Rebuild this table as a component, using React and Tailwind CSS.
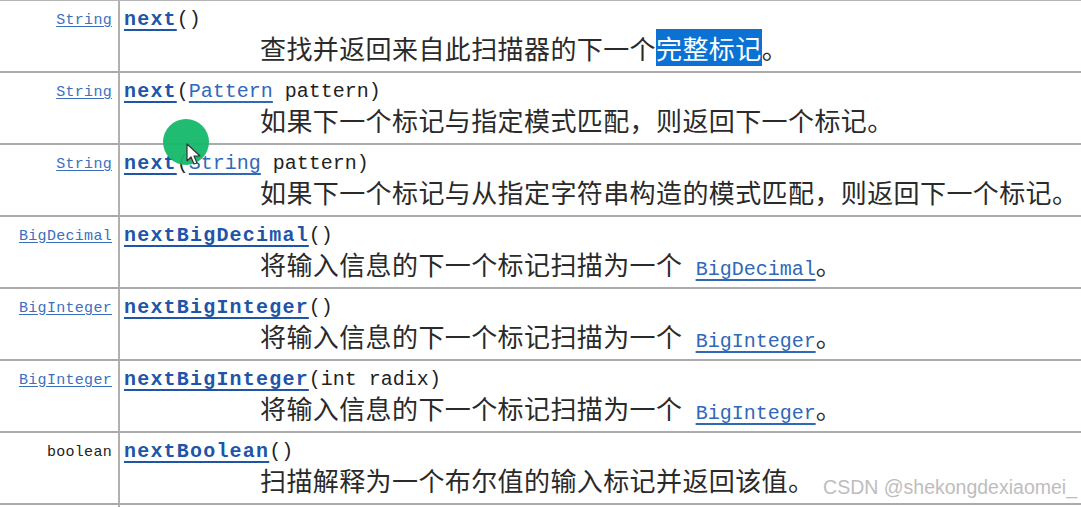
import React from 'react';

const rows = [
  { type: 'String', link: true, name: 'next', args: [], desc: [{ t: '查找并返回来自此扫描器的下一个' }, { t: '完整标记', hl: true }, { t: '。' }] },
  { type: 'String', link: true, name: 'next', args: [{ t: 'Pattern', link: true }, { t: ' pattern' }], desc: [{ t: '如果下一个标记与指定模式匹配，则返回下一个标记。' }] },
  { type: 'String', link: true, name: 'next', args: [{ t: 'String', link: true }, { t: ' pattern' }], desc: [{ t: '如果下一个标记与从指定字符串构造的模式匹配，则返回下一个标记。' }] },
  { type: 'BigDecimal', link: true, name: 'nextBigDecimal', args: [], desc: [{ t: '将输入信息的下一个标记扫描为一个 ' }, { t: 'BigDecimal', code: true }, { t: '。' }] },
  { type: 'BigInteger', link: true, name: 'nextBigInteger', args: [], desc: [{ t: '将输入信息的下一个标记扫描为一个 ' }, { t: 'BigInteger', code: true }, { t: '。' }] },
  { type: 'BigInteger', link: true, name: 'nextBigInteger', args: [{ t: 'int radix' }], desc: [{ t: '将输入信息的下一个标记扫描为一个 ' }, { t: 'BigInteger', code: true }, { t: '。' }] },
  { type: 'boolean', link: false, name: 'nextBoolean', args: [], desc: [{ t: '扫描解释为一个布尔值的输入标记并返回该值。' }] },
];

const mono = "font-['Liberation_Mono','Noto_Sans_CJK_SC',monospace]";
const cjk = "font-['Noto_Sans_CJK_SC','Liberation_Sans',sans-serif]";

function Row({ row }) {
  return (
    <div className="flex h-[72px] border-b-2 border-[#ababab]">
      <div className="w-[120px] shrink-0 border-r-2 border-[#b0b0b0] pr-[6px] pt-[5px] text-right">
        <span
          className={`${mono} text-[15px] leading-[17px] tracking-[0.3px] ${
            row.link ? 'text-[#3b6fc0] underline underline-offset-2' : 'text-[#222]'
          }`}
        >
          {row.type}
        </span>
      </div>
      <div className="flex-1 pl-[4px] pt-[7px]">
        <div className={`${mono} text-[20px] leading-[24px] text-[#222] whitespace-pre`}>
          <span className="font-bold tracking-[1.2px] text-[#1f55a8] underline underline-offset-4">{row.name}</span>
          <span>(</span>
          {row.args.map((a, i) => (
            <span key={i} className={a.link ? 'text-[#3168b8] underline underline-offset-4' : ''}>
              {a.t}
            </span>
          ))}
          <span>)</span>
        </div>
        <div className={`${cjk} pl-[136px] text-[26px] leading-[32px] tracking-[0.4px] text-[#2a2a2a] whitespace-pre`}>
          {row.desc.map((d, i) =>
            d.hl ? (
              <span key={i} className="bg-[#0b72d4] text-white">{d.t}</span>
            ) : d.code ? (
              <span key={i} className={`${mono} ml-[7px] text-[20px] tracking-normal text-[#3168b8] underline underline-offset-4`}>{d.t}</span>
            ) : (
              <span key={i}>{d.t}</span>
            )
          )}
        </div>
      </div>
    </div>
  );
}

export default function App() {
  return (
    <div className="relative w-[1081px] h-[507px] overflow-hidden bg-white">
      <div className="border-t border-[#b4b4b4]">
        {rows.map((r, i) => (
          <Row key={i} row={r} />
        ))}
        <div className="h-[6px] w-[120px] border-r-2 border-[#b0b0b0]" />
      </div>

      {/* cursor highlight */}
      <div className="absolute left-[163px] top-[119px] h-[46px] w-[46px] rounded-full bg-[#14b86a]/95" />
      <svg className="absolute left-[186px] top-[143px]" width="16" height="24" viewBox="0 0 16 24">
        <path d="M1 1 L1 18 L5 14 L8 21 L11 20 L8 13 L14 13 Z" fill="white" stroke="#333" strokeWidth="1.2" strokeLinejoin="round" />
      </svg>

      <div className="absolute right-[4px] top-[475px] font-['Liberation_Sans',sans-serif] text-[19.5px] leading-[24px] text-[#bdbdbd]">
        CSDN @shekongdexiaomei_
      </div>
    </div>
  );
}
